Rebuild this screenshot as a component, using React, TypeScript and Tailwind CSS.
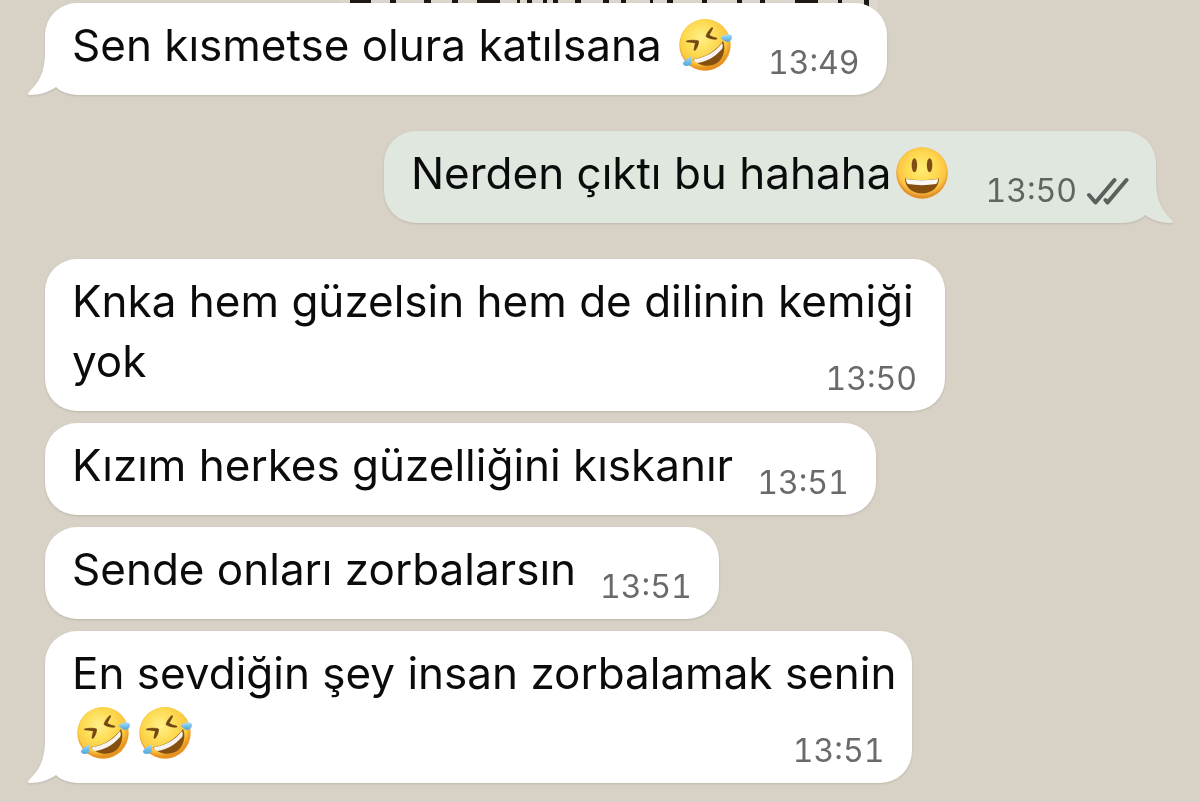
import type { ReactNode } from "react";
import clsx from "clsx";

type Side = "in" | "out";

interface BubbleProps {
    time: string;
    side?: Side;
    tail?: boolean;
    multiline?: boolean;
    className?: string;
    children: ReactNode;
}

const Rofl = () => (
    <svg viewBox="0 0 56 56" role="img" aria-label="🤣" className="mx-[3px] inline-block size-14 align-[-12px]">
        <defs>
            <linearGradient id="rofl-base" x1="0.3" y1="0" x2="0.6" y2="1">
                <stop offset="0" stopColor="#f3b73a" />
                <stop offset="0.6" stopColor="#f0a42c" />
                <stop offset="1" stopColor="#e58f1e" />
            </linearGradient>
            <radialGradient id="rofl-face" cx="0.42" cy="0.38" r="0.6">
                <stop offset="0" stopColor="#fff08a" />
                <stop offset="0.5" stopColor="#fddc55" />
                <stop offset="0.85" stopColor="#fbc83f" />
                <stop offset="1" stopColor="#fbc83f" stopOpacity="0" />
            </radialGradient>
            <linearGradient id="rofl-tear" x1="0" y1="0" x2="0" y2="1">
                <stop offset="0" stopColor="#a9def8" />
                <stop offset="1" stopColor="#4ba6de" />
            </linearGradient>
        </defs>
        <circle cx="28" cy="28" r="25.7" fill="url(#rofl-base)" />
        <circle cx="28" cy="27" r="25" fill="url(#rofl-face)" />
        <path d="M16 42C27 41 38 35 46 24C49 31 47 41 40 46C32 51 21 49 16 42Z" fill="#85500f" />
        <path d="M17 42C28 41 38 35 45 26C46 28 46 30 45 32C38 40 29 45 20 46C18 45 17 44 17 42Z" fill="#f7f3f0" />
        <path d="M9.500 24C14 23 18 23 21.500 24C21.500 28 20 31 18 33.500L17 33C17.500 30 18 28 18.500 26C15 25 12 25 9.500 24.700Z" fill="#704511" stroke="#704511" strokeWidth="0.8" strokeLinejoin="round" />
        <path d="M35 10.500C32 13 30 16 29 19.500C32 21.500 36 22.500 40 22L39.500 21C36.500 20.500 34 19.500 32 18C33.500 15.500 35 13 35.700 11Z" fill="#704511" stroke="#704511" strokeWidth="0.8" strokeLinejoin="round" />
        <path d="M43.500 21C47 17 52 16.500 54.500 18.500C56 20 54.500 24 51 24.700C48 25 46 23 43.500 21Z" fill="url(#rofl-tear)" />
        <path d="M14.500 39C15 43 15.500 47 12.500 48.500C10 49.500 6.500 49 6 47C6 43 11 42 14.500 39Z" fill="url(#rofl-tear)" />
    </svg>
);

const Smiley = () => (
    <svg viewBox="0 0 56 56" role="img" aria-label="😃" className="mx-[3px] inline-block size-14 align-[-12px]">
        <defs>
            <linearGradient id="smiley-base" x1="0" y1="0" x2="0" y2="1">
                <stop offset="0" stopColor="#f2b83c" />
                <stop offset="1" stopColor="#e28e28" />
            </linearGradient>
            <radialGradient id="smiley-face" cx="0.5" cy="0.42" r="0.56">
                <stop offset="0" stopColor="#ffec74" />
                <stop offset="0.55" stopColor="#fed950" />
                <stop offset="0.85" stopColor="#fcc444" />
                <stop offset="1" stopColor="#fcc444" stopOpacity="0" />
            </radialGradient>
        </defs>
        <circle cx="28" cy="28" r="25.8" fill="url(#smiley-base)" />
        <circle cx="28" cy="27.5" r="25" fill="url(#smiley-face)" />
        <ellipse cx="20.400" cy="20.300" rx="2.700" ry="7" fill="#7d4c14" />
        <ellipse cx="35.600" cy="20.300" rx="2.700" ry="7" fill="#7d4c14" />
        <path d="M11 33.500C22 35.500 34 35.500 45 33.500C45 42 38 48.500 28 48.500C18 48.500 11 42 11 33.500Z" fill="#85500f" />
        <path d="M12 34C23 35.700 33 35.700 44 34C44 36.500 43.300 38 42 39C33 40.500 23 40.500 14 39C12.700 38 12 36.500 12 34Z" fill="#faf8f5" />
    </svg>
);

const DoubleCheck = () => (
    <svg
        viewBox="0 0 44 28"
        role="img"
        aria-label="Teslim edildi"
        className="h-7 w-11 fill-none stroke-[#5a605b] stroke-4"
        strokeLinecap="round"
        strokeLinejoin="round"
    >
        <path d="M4 18L10.500 25.500L29.500 3M20.500 23L22.500 25.500L41.500 3" />
    </svg>
);

const Tail = ({ side }: { side: Side }) => (
    <svg
        viewBox="0 0 40 50"
        aria-hidden="true"
        className={clsx(
            "absolute bottom-0 h-[50px] w-10",
            side === "in" ? "-left-[17px] fill-white" : "-right-[17px] -scale-x-100 fill-[#e0e7df]",
        )}
    >
        <path d="M17 0V6C17 28 11 37 1 47C-0.500 48.500 0 50 2 50C12 50 21 47 28 42L40 30V0Z" />
    </svg>
);

const Bubble = ({ time, side = "in", tail = false, multiline = false, className, children }: BubbleProps) => (
    <li
        className={clsx(
            "relative rounded-[32px] drop-shadow-[0_1px_1px_rgba(0,0,0,0.12)]",
            side === "in" ? "self-start bg-white" : "self-end bg-[#e0e7df]",
            multiline ? "grid max-w-full pr-4 pl-[27px]" : "flex gap-6 px-[27px]",
            className,
        )}
    >
        {tail && <Tail side={side} />}
        <p
            className={clsx(
                "relative col-start-1 row-start-1 pt-3 pb-5 text-[44px] leading-15",
                !multiline && "has-[svg]:pr-2",
            )}
        >
            {children}
        </p>
        <time
            className={clsx(
                "relative col-start-1 row-start-1 flex items-center gap-2 self-end justify-self-end pb-3 text-[32px] leading-10 tabular-nums",
                side === "in" ? "text-[#6a6a6a]" : "text-[#5f6560]",
                multiline && "pr-3",
            )}
        >
            {time}
            {side === "out" && <DoubleCheck />}
        </time>
    </li>
);

// Lower edge of the wallpaper lettering that scrolls behind the first message
const Wallpaper = () => (
    <svg viewBox="0 0 540 10" aria-hidden="true" className="absolute top-0 left-[340px] h-[10px] w-[540px]">
        <path d="M0 0H538V10H0Z" fill="#dcd6cc" />
        <path
            d="M10 0H31V3H10ZM50 0H56V3H50ZM84 0H91V3H84ZM112 0H118V3H112ZM137 0H160V3H137ZM177 0H180V3H177ZM187 0H192V3H187ZM203 0H207V3H203ZM213 0H218V3H213ZM235 0H241V3H235ZM263 0H269V3H263ZM281 0H286V3H281ZM310 0H313V3H310ZM327 0H333V3H327ZM362 0H367V3H362ZM397 0H402V3H397ZM420 0H425V3H420ZM455 0H478V3H455ZM498 0H502V3H498ZM524 0H529V8H524Z"
            fill="#1b1815"
        />
    </svg>
);

export default function App() {
    return (
        <main className="relative min-h-screen bg-[#d8d1c5] font-['Inter','Noto_Sans',sans-serif] text-[#0a0c0b]">
            <Wallpaper />
            <ol className="flex flex-col gap-9 pt-[3px] pr-11 pb-5 pl-[45px]">
                <Bubble time="13:49" tail>
                    Sen kısmetse olura katılsana <Rofl />
                </Bubble>
                <Bubble time="13:50" side="out" tail>
                    Nerden çıktı bu hahaha<Smiley />
                </Bubble>
                <li>
                    <ol className="flex flex-col gap-3">
                        <Bubble time="13:50" multiline className="w-[900px]">
                            Knka hem güzelsin hem de dilinin kemiği
                            <br />
                            yok
                        </Bubble>
                        <Bubble time="13:51">Kızım herkes güzelliğini kıskanır</Bubble>
                        <Bubble time="13:51">Sende onları zorbalarsın</Bubble>
                        <Bubble time="13:51" multiline tail>
                            En sevdiğin şey insan zorbalamak senin
                            <br />
                            <Rofl />
                            <Rofl />
                        </Bubble>
                    </ol>
                </li>
            </ol>
        </main>
    );
}
